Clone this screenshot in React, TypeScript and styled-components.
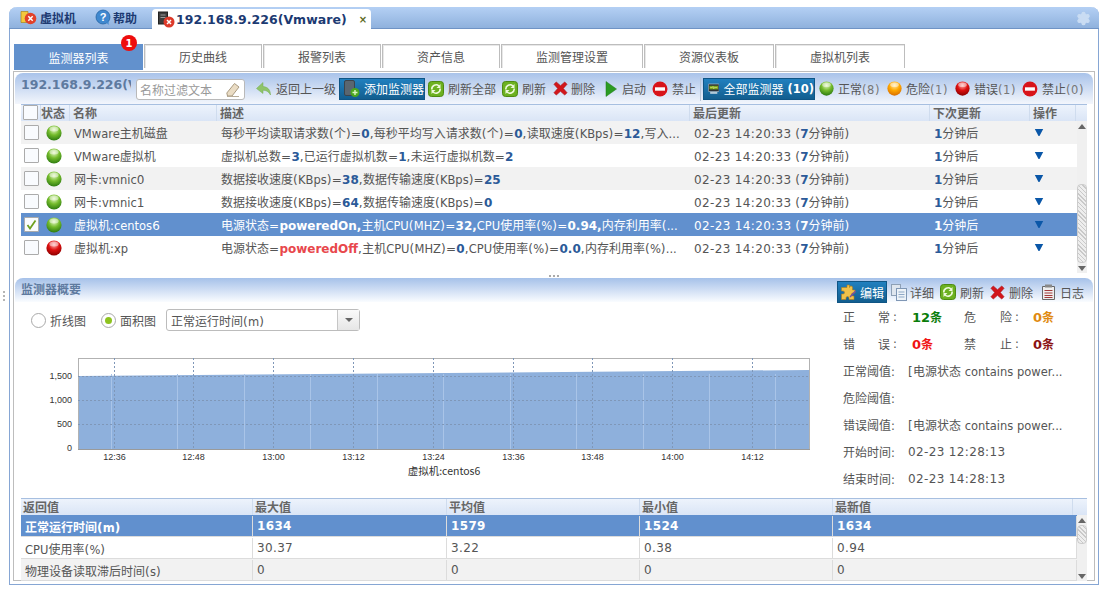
import React from "react";
import styled, { createGlobalStyle, css } from "styled-components";
import { Settings } from "lucide-react";

const Global = createGlobalStyle`
  html, body { margin: 0; padding: 0; background: #fff; }
  body { font-family: "DejaVu Sans", sans-serif; font-size: 11.5px; color: #555; width: 1105px; height: 592px; overflow: hidden; }
  * { box-sizing: border-box; }
`;

const Page = styled.div`display: flex; width: 1105px; height: 592px; padding-top: 7px;`;
const Handle = styled.div`
  width: 9px; flex: none; display: flex; flex-direction: column; align-items: center; justify-content: center;
  gap: 2px; padding-right: 2px; height: 577px;
`;
const HandleDot = styled.i`width: 2px; height: 2px; background: #b5b5b5; display: block;`;
const Win = styled.div`
  width: 1090px; height: 578px; border: 1px solid #86a6d4; border-top: 0; border-radius: 8px 8px 0 0;
  display: flex; flex-direction: column; background: #fff;
`;
const WinHead = styled.div`
  height: 22px; flex: none; display: flex; align-items: flex-end; padding-left: 11px; position: relative;
  margin: 0 -1px; border-radius: 8px 8px 0 0; background: linear-gradient(#b4d0f4, #8fb1dd); border-bottom: 1px solid #6f93c5;
`;
const Nav = styled.div<{ $ml?: number; $gap?: number }>`
  display: flex; align-items: center; gap: ${p => p.$gap ?? 3}px; height: 21px; margin-left: ${p => p.$ml ?? 0}px;
  font-weight: 700; color: #1c3a72;
`;
const ActiveTab = styled.div`
  width: 219px; height: 20px; margin-left: 15px; background: #fff; border-radius: 4px 4px 0 0; margin-bottom: -1px;
  display: flex; align-items: center; padding-left: 6px; gap: 1px; color: #1c3a72; font-weight: 700; font-size: 12.5px; letter-spacing: 0.03px;
`;
const CloseX = styled.span`margin-left: 11px; font-size: 10px; color: #5c6a22; font-weight: 700;`;
const Gear = styled(Settings)`position: absolute; right: 8px; top: 4px; color: #c9dcf3; fill: #c9dcf3;`;

const WinBody = styled.div`flex: 1; display: flex; flex-direction: column; padding: 15px 3px 3px 3px;`;
const Tabs = styled.div`display: flex; gap: 1px; height: 27px; padding-left: 1px; flex: none;`;
const Tab = styled.div<{ $w: number; $on?: boolean }>`
  width: ${p => p.$w}px; position: relative; display: flex; align-items: center; justify-content: center;
  height: ${p => (p.$on ? 26 : 24)}px;
  ${p => p.$on
    ? css`background: #6291cd; color: #fff;`
    : css`border: 1px solid #bdbdbd; border-bottom: 0; box-shadow: inset 1px 1px 0 #e8e8e8; color: #555;`}
`;
const Badge = styled.span`
  position: absolute; left: 107px; top: -9px; width: 16px; height: 16px; border-radius: 50%; background: #ee0d0d;
  color: #fff; font-weight: 700; font-size: 10px; display: flex; align-items: center; justify-content: center; z-index: 1;
`;

const Panel = styled.div`
  width: 1082px; height: 510px; border: 1px solid #bdbdbd; padding-top: 1px; display: flex; flex-direction: column; flex: none;
`;
const Toolbar = styled.div`
  height: 31px; flex: none; margin: 0 1px; display: flex; align-items: center; padding-left: 6px;
  background: linear-gradient(#a9c3ea, #f3f6fc); border-radius: 8px 8px 0 0;
`;
const BarTitle = styled.div`
  width: 110px; overflow: hidden; white-space: nowrap; font-weight: 700; font-size: 12.5px; color: #5e7a9f; margin-top: -8px; flex: none;
`;
const Filter = styled.div`
  width: 109px; height: 21px; margin: 2px 0 0 5px; flex: none; border: 1px solid #b9b9b9; border-radius: 3px; background: #fff;
  display: flex; align-items: center; justify-content: space-between; padding: 0 3px 0 3px; color: #999;
`;
const Tool = styled.div<{ $ml: number; $w: number; $gap?: number; $on?: boolean; $pl?: number }>`
  flex: none; height: 22px; width: ${p => p.$w}px; margin-left: ${p => p.$ml}px; display: flex; align-items: center;
  gap: ${p => p.$gap ?? 4}px; white-space: nowrap; color: #555;
  ${p => p.$on && css`
    background: linear-gradient(#2180bf, #125e8f); color: #fff; padding-left: ${p.$pl ?? 4}px;
    border: 1px solid #0f5585;
  `}
`;
const ToolSep = styled.i`flex: none; width: 1px; height: 24px; margin-left: 4px; background: #b9c6d8; display: block;`;
const Count = styled.span`letter-spacing: 0.6px; color: #777;`;
const CountStrong = styled.b`font-weight: 700;`;

const GridWrap = styled.div`margin: 0 7px; flex: none;`;
const HeadRow = styled.div<{ $h: number }>`
  display: flex; height: ${p => p.$h}px; border-top: 1px solid #a7bfe0; background: linear-gradient(#edf3fc, #dae5f6);
  font-weight: 700; color: #666;
`;
const HeadCell = styled.div<{ $w: number; $pl?: number }>`
  flex: none; width: ${p => p.$w}px; padding: 0 0 1px ${p => p.$pl ?? 3}px; border-right: 1px solid #cfdcee;
  display: flex; align-items: center; overflow: hidden; white-space: nowrap;
`;
const HeadFill = styled.div`flex: 1;`;
const GridBody = styled.div<{ $h: number }>`display: flex; height: ${p => p.$h}px; overflow: hidden;`;
const Rows = styled.div`flex: 1; min-width: 0;`;
const Row = styled.div<{ $odd?: boolean; $sel?: boolean }>`
  display: flex; height: 23px; align-items: center; white-space: nowrap;
  background: ${p => (p.$sel ? "#6190ce" : p.$odd ? "#f2f2f2" : "#fff")};
  color: ${p => (p.$sel ? "#fff" : "#555")};
`;
const Cell = styled.div<{ $w: number; $pl?: number }>`
  flex: none; width: ${p => p.$w}px; padding-left: ${p => p.$pl ?? 4}px; overflow: hidden; display: flex; align-items: center; white-space: pre;
`;
const Check = styled.span`
  width: 15px; height: 15px; border: 1px solid #ababab; border-radius: 1px; background: #f9fbfe; display: flex; align-items: center; justify-content: center;
`;
const Val = styled.b<{ $sel?: boolean; $red?: boolean }>`
  font-weight: 700; font-size: 12px; color: ${p => (p.$sel ? "#fff" : p.$red ? "#e8474c" : "#2b5a98")};
`;
const Tri = styled.span`
  width: 10px; height: 10px; background: #0a57a8; margin-top: -3px; display: block; flex: none;
  clip-path: polygon(0 0, 100% 0, 100% 15%, 55% 100%, 45% 100%, 0 15%);
`;
const Scroll = styled.div`
  width: 10px; flex: none; background: #f0f0f0; display: flex; flex-direction: column; align-items: center;
`;
const ArrowUp = styled.span`
  width: 0; height: 0; border-left: 4px solid transparent; border-right: 4px solid transparent; border-bottom: 5px solid #666; margin-top: 3px; flex: none;
`;
const ArrowDown = styled.span`
  width: 0; height: 0; border-left: 4px solid transparent; border-right: 4px solid transparent; border-top: 5px solid #666; margin: 3px 0 2px; flex: none;
`;
const Thumb = styled.span<{ $top: number; $h: number }>`
  width: 10px; height: ${p => p.$h}px; margin-top: ${p => p.$top}px; flex: none; border-radius: 4px; border: 1px solid #ccc;
  background: repeating-linear-gradient(45deg, #c9c9c9, #c9c9c9 1px, #eee 1px, #eee 3px);
`;
const Split = styled.div`
  height: 5px; flex: none; display: flex; justify-content: center; gap: 2px; padding-top: 2px;
`;
const SplitDot = styled.i`width: 2px; height: 2px; background: #aaa; display: block;`;

const SumHead = styled.div`
  height: 24px; flex: none; margin: 0 1px; display: flex; padding-left: 6px; border-radius: 8px 8px 0 0;
  background: linear-gradient(#a6c1e9, #fafcff);
`;
const SumTitle = styled.div`font-weight: 700; color: #5e7a9f; padding-top: 2px;`;
const SumTools = styled.div`margin-left: auto; padding: 3px 9px 0 0; display: flex; align-items: flex-start; position: relative; z-index: 1;`;
const Overview = styled.div`height: 196px; flex: none; display: flex;`;
const LeftCol = styled.div`width: 823px; flex: none; padding: 7px 0 0 7px;`;
const Controls = styled.div`height: 22px; display: flex; align-items: center; padding-left: 10px;`;
const Radio = styled.span<{ $ml?: number }>`
  width: 15px; height: 15px; border: 1px solid #a9a9a9; border-radius: 50%; background: #fff; flex: none; margin-left: ${p => p.$ml ?? 0}px;
  display: flex; align-items: center; justify-content: center; margin-right: 4px;
`;
const RadioDot = styled.i`width: 7px; height: 7px; border-radius: 50%; background: #8ec31f; display: block;`;
const Select = styled.div`
  width: 194px; height: 22px; margin-left: 10px; border: 1px solid #bcbcbc; border-radius: 3px; display: flex; align-items: center; padding-left: 4px; position: relative; background: #fff;
`;
const SelectBtn = styled.span`
  margin-left: auto; width: 22px; height: 100%; border-left: 1px solid #c6c6c6; background: linear-gradient(#fafafa, #e6e6e6); display: flex; align-items: center; justify-content: center;
`;
const SelectArrow = styled.i`width: 0; height: 0; border-left: 4px solid transparent; border-right: 4px solid transparent; border-top: 4px solid #666; display: block;`;
const ChartSvg = styled.svg`display: block; margin-top: 14px;`;
const RightCol = styled.div`flex: 1; padding: 1px 0 0 6px;`;
const InfoRow = styled.div`height: 27px; display: flex; align-items: center; white-space: nowrap;`;
const Spread = styled.span<{ $w: number }>`width: ${p => p.$w}px; display: flex; justify-content: space-between; flex: none;`;
const Colon = styled.span<{ $w: number }>`width: ${p => p.$w}px; flex: none; padding-left: 3px;`;
const Stat = styled.b<{ $c: string; $w?: number }>`font-weight: 700; font-size: 13px; color: ${p => p.$c}; width: ${p => p.$w ?? 52}px; flex: none;`;
const InfoLabel = styled.span`width: 65px; flex: none;`;

const Zh = styled.span`font-family: "Noto Sans CJK SC", "DejaVu Sans", sans-serif; font-size: 12px;`;
const Num = styled.span`font-size: 12px; letter-spacing: 0.35px;`;
const Sym = styled.span`font-size: 12px; letter-spacing: 0.3px;`;

const T = ({ t }: { t: string }) => (
  <>
    {t.split(/([\u3400-\u9fff]+|\d[\d:\- .]*\d|\d|[()=,\[]+)/).map((s, i) => {
      if (i % 2 === 0) return s;
      if (/[\u3400-\u9fff]/.test(s)) return <Zh key={i}>{s}</Zh>;
      if (/\d/.test(s)) return <Num key={i}>{s}</Num>;
      return <Sym key={i}>{s}</Sym>;
    })}
  </>
);

const Rich = ({ t, sel }: { t: string; sel?: boolean }) => (
  <>
    {t.split("*").map((s, i) =>
      i % 2 ? <Val key={i} $sel={sel} $red={s === "poweredOff"}>{s}</Val> : <T key={i} t={s} />
    )}
  </>
);

/* icons */
const Ball = ({ c, s = 15 }: { c: "g" | "o" | "r" | "b"; s?: number }) => {
  const m = { g: ["#e4f7c4", "#74bb2c", "#2c7a10"], o: ["#ffe9a8", "#ffa800", "#d96f00"], r: ["#ffb0b0", "#dd1010", "#8c0000"], b: ["#cfe6ff", "#4a8fd8", "#14509c"] }[c];
  return (
    <svg width={s} height={s} viewBox="0 0 16 16">
      <defs>
        <radialGradient id={`ball-${c}`} cx="50%" cy="28%" r="72%">
          <stop offset="0" stopColor={m[0]} />
          <stop offset="0.5" stopColor={m[1]} />
          <stop offset="1" stopColor={m[2]} />
        </radialGradient>
      </defs>
      <circle cx="8" cy="8" r="7.6" fill={`url(#ball-${c})`} />
      <ellipse cx="8" cy="4" rx="4.600" ry="2.500" fill="#fff" opacity="0.45" />
    </svg>
  );
};
const Refresh = () => (
  <svg width="16" height="16" viewBox="0 0 16 16">
    <rect x="0.500" y="0.500" width="15" height="15" rx="3" fill="#6cb120" stroke="#4d8a12" />
    <path d="M3.800 8.500A4.300 4.300 0 0 1 11 5" fill="none" stroke="#eef9dc" strokeWidth="1.600" />
    <path d="M12.200 7.500A4.300 4.300 0 0 1 5 11" fill="none" stroke="#eef9dc" strokeWidth="1.600" />
    <path d="M12.500 3v4h-4z" fill="#eef9dc" />
    <path d="M3.500 13V9h4z" fill="#eef9dc" />
  </svg>
);
const RedX = () => (
  <svg width="15" height="15" viewBox="0 0 16 16">
    <path d="M1 3.500 3.500 1 8 5l4.500-4L15 3.500 11 8l4 4.500L12.500 15 8 11l-4.500 4L1 12.500 5 8z" fill="#d2161b" stroke="#a80e12" strokeWidth="0.6" />
  </svg>
);
const Play = () => (
  <svg width="12" height="16" viewBox="0 0 12 16"><path d="M1 0.500 11.500 8 1 15.500z" fill="#2b9b22" stroke="#1e7a18" strokeWidth="0.5" /></svg>
);
const Forbid = () => (
  <svg width="16" height="16" viewBox="0 0 16 16">
    <circle cx="8" cy="8" r="7.500" fill="#d8141a" />
    <rect x="3" y="6.300" width="10" height="3.400" fill="#fff" />
  </svg>
);
const Back = () => (
  <svg width="16" height="16" viewBox="0 0 16 16"><path d="M7 1.500 0.500 7.500 7 12.500V9.300c3 0 5.500 1 7.500 4.700 0-5-2.500-8-7.500-8.500z" fill="#8fc46a" stroke="#74ad4e" strokeWidth="0.5" /></svg>
);
const ServerAdd = () => (
  <svg width="16" height="18" viewBox="0 0 16 18">
    <rect x="0.500" y="0.500" width="10" height="15" rx="1.500" fill="#5a6670" stroke="#3b444c" />
    <circle cx="11" cy="12.500" r="4.500" fill="#4aa51f" />
    <path d="M11 10v5M8.500 12.500h5" stroke="#d9f5c0" strokeWidth="1.400" />
  </svg>
);
const Monitor = () => (
  <svg width="16" height="16" viewBox="0 0 16 16">
    <rect x="0.500" y="1" width="15" height="10.500" rx="1" fill="#2b3136" stroke="#c9d2da" strokeWidth="0.8" />
    <rect x="2" y="3.500" width="12" height="5" fill="#7ea51c" />
    <path d="M3 6h3l1-1.500 1 3 1-1.500h4" stroke="#e7f4a0" strokeWidth="0.8" fill="none" />
    <rect x="3" y="12.500" width="10" height="2" fill="#dfe5ea" />
  </svg>
);
const Puzzle = () => (
  <svg width="17" height="17" viewBox="0 0 17 17">
    <path d="M7 1h2.500v2.500a1.500 1.500 0 0 1 3 0V6H15v3h-2a1.500 1.500 0 0 0 0 3h1v3.500H9V14a1.500 1.500 0 0 0-3 0v1.500H1.500V10H3a1.500 1.500 0 0 0 0-3H1.500V3.500H7z" fill="#f1c14a" stroke="#b57d16" strokeWidth="0.6" />
    <path d="M10 13 15.500 7" stroke="#7a4f9e" strokeWidth="1.400" />
  </svg>
);
const Docs = () => (
  <svg width="16" height="17" viewBox="0 0 16 17">
    <rect x="0.500" y="0.500" width="9" height="11" fill="#dfe6ee" stroke="#8ea0b5" />
    <rect x="5.500" y="4.500" width="10" height="12" fill="#eef3f8" stroke="#7f97b5" />
    <path d="M7.500 8h6M7.500 10.500h6M7.500 13h6" stroke="#8ea8c6" />
  </svg>
);
const Log = () => (
  <svg width="13" height="16" viewBox="0 0 13 16">
    <path d="M0.500 2.500h8l4 0v13h-12z" fill="#eee" stroke="#666" />
    <rect x="3" y="0.500" width="7" height="3" fill="#888" />
    <path d="M2.500 6.500h8M2.500 9h8M2.500 11.500h8M2.500 13.500h8" stroke="#a23a3a" strokeWidth="1.200" />
  </svg>
);
const Eraser = () => (
  <svg width="16" height="16" viewBox="0 0 16 16">
    <path d="M9.500 1.500 14 5 7 14H2.500L1.800 11z" fill="#eadcc4" stroke="#a99a80" />
    <path d="M2 14.500h12" stroke="#b7ac98" />
  </svg>
);
const Folder = () => (
  <svg width="17" height="17" viewBox="0 0 17 17">
    <path d="M1 2.500h7l-.500 11H1z" fill="#f4c83c" stroke="#a8861c" strokeWidth="0.7" />
    <circle cx="10.500" cy="9.500" r="5.800" fill="#e1412a" />
    <path d="M8.300 7.300l4.400 4.400M12.700 7.300l-4.400 4.400" stroke="#fff" strokeWidth="1.500" />
  </svg>
);
const Help = () => (
  <svg width="17" height="17" viewBox="0 0 17 17">
    <circle cx="8" cy="8" r="7" fill="#3f88cf" stroke="#1f5f9e" strokeWidth="0.7" />
    <text x="8" y="12" textAnchor="middle" fontSize="11" fontWeight="700" fill="#fff" fontFamily="Liberation Sans, sans-serif">?</text>
    <path d="M11 13l2.500 3 .2-4z" fill="#3f88cf" />
  </svg>
);
const ServerX = () => (
  <svg width="17" height="17" viewBox="0 0 17 17">
    <rect x="0.500" y="1" width="9" height="12" fill="#3d3d3d" stroke="#222" />
    <path d="M2.500 4h5M2.500 6.500h5" stroke="#9a9a9a" />
    <circle cx="11" cy="11" r="5.500" fill="#dd3a2a" />
    <path d="M9 9l4 4M13 9l-4 4" stroke="#fff" strokeWidth="1.500" />
  </svg>
);
const Tick = () => (
  <svg width="11" height="11" viewBox="0 0 11 11"><path d="M1.500 6 4 9.500 9.500 1.500" fill="none" stroke="#6ea020" strokeWidth="1.800" /></svg>
);

const tabs: [string, number][] = [["监测器列表", 129], ["历史曲线", 118], ["报警列表", 118], ["资产信息", 118], ["监测管理设置", 142], ["资源仪表板", 130], ["虚拟机列表", 130]];
const cols = [20, 29, 147, 473, 240, 100, 46];
const time = "02-23 14:20:33 (*7*分钟前)";
const rows = [
  { c: "g", n: "VMware主机磁盘", d: "每秒平均读取请求数(个)=*0*,每秒平均写入请求数(个)=*0*,读取速度(KBps)=*12*,写入..." },
  { c: "g", n: "VMware虚拟机", d: "虚拟机总数=*3*,已运行虚拟机数=*1*,未运行虚拟机数=*2*" },
  { c: "g", n: "网卡:vmnic0", d: "数据接收速度(KBps)=*38*,数据传输速度(KBps)=*25*" },
  { c: "g", n: "网卡:vmnic1", d: "数据接收速度(KBps)=*64*,数据传输速度(KBps)=*0*" },
  { c: "g", n: "虚拟机:centos6", sel: true, d: "电源状态=*poweredOn,*主机CPU(MHZ)=*32,*CPU使用率(%)=*0.94,*内存利用率(..." },
  { c: "r", n: "虚拟机:xp", d: "电源状态=*poweredOff*,主机CPU(MHZ)=*0*,CPU使用率(%)=*0.0*,内存利用率(%)..." },
] as const;
const tools = [
  { ml: 11, w: 80, icon: <Back />, t: "返回上一级" },
  { ml: 3, w: 86, icon: <ServerAdd />, t: "添加监测器", on: true },
  { ml: 3, w: 68, icon: <Refresh />, t: "刷新全部" },
  { ml: 6, w: 44, icon: <Refresh />, t: "刷新" },
  { ml: 7, w: 43, gap: 3, icon: <RedX />, t: "删除" },
  { ml: 9, w: 41, gap: 5, icon: <Play />, t: "启动" },
  { ml: 6, w: 44, icon: <Forbid />, t: "禁止" },
];
const counts = [
  { ml: 4, c: "g", t: "正常", n: 8 },
  { ml: 6, c: "o", t: "危险", n: 1 },
  { ml: 6, c: "r", t: "错误", n: 1 },
] as const;
const sumTools = [
  { ml: 0, w: 50, gap: 3, pl: 2, icon: <Puzzle />, t: "编辑", on: true },
  { ml: 4, w: 43, gap: 3, icon: <Docs />, t: "详细" },
  { ml: 6, w: 44, icon: <Refresh />, t: "刷新" },
  { ml: 6, w: 44, icon: <RedX />, t: "删除" },
  { ml: 8, w: 42, gap: 5, icon: <Log />, t: "日志" },
];
const valCols = [232, 194, 193, 193, 244];
const valRows = [
  { v: ["正常运行时间(m)", "1634", "1579", "1524", "1634"], sel: true },
  { v: ["CPU使用率(%)", "30.37", "3.22", "0.38", "0.94"] },
  { v: ["物理设备读取滞后时间(s)", "0", "0", "0", "0"], odd: true },
];

const ValRow = styled(Row)`height: 22px; border-bottom: 1px solid #dcdcdc; padding-top: 1px;`;
const ValCell = styled(Cell)`height: 100%; border-right: 1px solid #dcdcdc;`;
const ValBold = styled.b`font-weight: 700;`;

const Chart = () => {
  const ys: [string, number, number][] = [["1,500", 376, 3], ["1,000", 400, 3], ["500", 424, 3], ["0", 449, 2]];
  const xs: [string, number][] = [["12:36", 114.5], ["12:48", 193.5], ["13:00", 273.5], ["13:12", 353.5], ["13:24", 433.5], ["13:36", 513.5], ["13:48", 592.5], ["14:00", 672.5], ["14:12", 752.5]];
  const light = [111, 177, 244, 310, 377, 443, 510, 576, 643, 709, 775];
  return (
    <ChartSvg width="810" height="135" viewBox="21 345 810 135">
      <rect x="78.500" y="358.500" width="731" height="91" fill="#fff" stroke="#b2b2b2" />
      <path d="M79 376 L809 370 V449 H79z" fill="#8eb0dc" />
      {light.map(x => <line key={x} x1={x + 0.5} x2={x + 0.5} y1="374" y2="449" stroke="#a9c4e8" />)}
      {ys.slice(0, 3).map(([, y]) => <line key={y} x1="78" x2="809" y1={y + 0.5} y2={y + 0.5} stroke="#7f97b8" strokeDasharray="2 2" />)}
      {xs.map(([, x]) => <line key={x} x1={x} x2={x} y1="358" y2="449" stroke="#7f97b8" strokeDasharray="2 2" />)}
      <line x1="78" x2="810" y1="449.500" y2="449.500" stroke="#9a9a9a" />
      {ys.map(([l, y, d]) => (
        <text key={l} x="72" y={y + d} textAnchor="end" fontSize="9" fill="#333" fontFamily="Liberation Sans, sans-serif">{l}</text>
      ))}
      {xs.map(([l, x]) => (
        <text key={l} x={x} y="460" textAnchor="middle" fontSize="9" fill="#333" fontFamily="Liberation Sans, sans-serif">{l}</text>
      ))}
      <text x="444" y="475" textAnchor="middle" fontSize="10.500" fill="#333" fontFamily="Noto Sans CJK SC, sans-serif">虚拟机:centos6</text>
    </ChartSvg>
  );
};

export default function App() {
  return (
    <Page>
      <Global />
      <Handle>
        <HandleDot /><HandleDot /><HandleDot />
      </Handle>
      <Win>
        <WinHead>
          <Nav $gap={3}><Folder /><Zh>虚拟机</Zh></Nav>
          <Nav $ml={19} $gap={1}><Help /><Zh>帮助</Zh></Nav>
          <ActiveTab>
            <ServerX />
            192.168.9.226(Vmware)
            <CloseX>×</CloseX>
          </ActiveTab>
          <Gear size={15} />
        </WinHead>
        <WinBody>
          <Tabs>
            {tabs.map(([t, w], i) => (
              <Tab key={t} $w={w} $on={i === 0}>
                <Zh>{t}</Zh>
                {i === 0 && <Badge>1</Badge>}
              </Tab>
            ))}
          </Tabs>
          <Panel>
            <Toolbar>
              <BarTitle>192.168.9.226(Vmware)</BarTitle>
              <Filter><Zh>名称过滤文本</Zh><Eraser /></Filter>
              {tools.map(b => (
                <Tool key={b.t} $ml={b.ml} $w={b.w} $gap={b.gap} $on={b.on}>
                  {b.icon}<Zh>{b.t}</Zh>
                </Tool>
              ))}
              <ToolSep />
              <Tool $ml={2} $w={112} $on>
                <Monitor /><Zh>全部监测器</Zh><CountStrong>(10)</CountStrong>
              </Tool>
              {counts.map(b => (
                <Tool key={b.t} $ml={b.ml} $w={62}>
                  <Ball c={b.c} /><span><Zh>{b.t}</Zh><Count>({b.n})</Count></span>
                </Tool>
              ))}
              <Tool $ml={5} $w={62}>
                <Forbid /><span><Zh>禁止</Zh><Count>(0)</Count></span>
              </Tool>
            </Toolbar>
            <GridWrap>
              <HeadRow $h={17}>
                <HeadCell $w={20} $pl={2}><Check /></HeadCell>
                {["状态", "名称", "描述", "最后更新", "下次更新", "操作"].map((h, i) => (
                  <HeadCell key={h} $w={cols[i + 1]} $pl={i === 0 ? 0 : 3}><Zh>{h}</Zh></HeadCell>
                ))}
                <HeadFill />
              </HeadRow>
              <GridBody $h={152}>
                <Rows>
                  {rows.map((r, i) => {
                    const sel = "sel" in r;
                    return (
                      <Row key={r.n} $odd={i % 2 === 0} $sel={sel}>
                        <Cell $w={cols[0]} $pl={3}><Check>{sel && <Tick />}</Check></Cell>
                        <Cell $w={cols[1]} $pl={5}><Ball c={r.c} s={16} /></Cell>
                        <Cell $w={cols[2]}><span><T t={r.n} /></span></Cell>
                        <Cell $w={cols[3]}><span><Rich t={r.d} sel={sel} /></span></Cell>
                        <Cell $w={cols[4]}><span><Rich t={time} sel={sel} /></span></Cell>
                        <Cell $w={cols[5]}><span><Rich t="*1*分钟后" sel={sel} /></span></Cell>
                        <Cell $w={cols[6]}><Tri /></Cell>
                      </Row>
                    );
                  })}
                </Rows>
                <Scroll>
                  <ArrowUp />
                  <Thumb $top={55} $h={79} />
                  <ArrowDown />
                </Scroll>
              </GridBody>
            </GridWrap>
            <Split><SplitDot /><SplitDot /><SplitDot /></Split>
            <SumHead>
              <SumTitle><Zh>监测器概要</Zh></SumTitle>
              <SumTools>
                {sumTools.map(b => (
                  <Tool key={b.t} $ml={b.ml} $w={b.w} $gap={b.gap ?? 4} $on={b.on} $pl={b.pl}>
                    {b.icon}<Zh>{b.t}</Zh>
                  </Tool>
                ))}
              </SumTools>
            </SumHead>
            <Overview>
              <LeftCol>
                <Controls>
                  <Radio /><Zh>折线图</Zh>
                  <Radio $ml={15}><RadioDot /></Radio><Zh>面积图</Zh>
                  <Select>
                    <span><T t="正常运行时间(m)" /></span>
                    <SelectBtn><SelectArrow /></SelectBtn>
                  </Select>
                </Controls>
                <Chart />
              </LeftCol>
              <RightCol>
                <InfoRow>
                  <Spread $w={47}><Zh>正</Zh><Zh>常</Zh></Spread><Colon $w={22}>:</Colon>
                  <Stat $c="#0a7d0a">12<Zh>条</Zh></Stat>
                  <Spread $w={48}><Zh>危</Zh><Zh>险</Zh></Spread><Colon $w={21}>:</Colon>
                  <Stat $c="#e08a10">0<Zh>条</Zh></Stat>
                </InfoRow>
                <InfoRow>
                  <Spread $w={47}><Zh>错</Zh><Zh>误</Zh></Spread><Colon $w={22}>:</Colon>
                  <Stat $c="#f01414">0<Zh>条</Zh></Stat>
                  <Spread $w={48}><Zh>禁</Zh><Zh>止</Zh></Spread><Colon $w={21}>:</Colon>
                  <Stat $c="#8b1212">0<Zh>条</Zh></Stat>
                </InfoRow>
                <InfoRow><InfoLabel><T t="正常阈值:" /></InfoLabel><span><T t="[电源状态 contains power..." /></span></InfoRow>
                <InfoRow><InfoLabel><T t="危险阈值:" /></InfoLabel></InfoRow>
                <InfoRow><InfoLabel><T t="错误阈值:" /></InfoLabel><span><T t="[电源状态 contains power..." /></span></InfoRow>
                <InfoRow><InfoLabel><T t="开始时间:" /></InfoLabel><span><T t="02-23 12:28:13" /></span></InfoRow>
                <InfoRow><InfoLabel><T t="结束时间:" /></InfoLabel><span><T t="02-23 14:28:13" /></span></InfoRow>
              </RightCol>
            </Overview>
            <GridWrap>
              <HeadRow $h={17}>
                {["返回值", "最大值", "平均值", "最小值", "最新值"].map((h, i) => (
                  <HeadCell key={h} $w={i === 4 ? 240 : valCols[i]} $pl={2}><Zh>{h}</Zh></HeadCell>
                ))}
                <HeadFill />
              </HeadRow>
              <GridBody $h={66}>
                <Rows>
                  {valRows.map(r => (
                    <ValRow key={r.v[0]} $sel={r.sel} $odd={r.odd}>
                      {r.v.map((v, i) => (
                        <ValCell key={i} $w={valCols[i]}>
                          {r.sel ? <ValBold><T t={v} /></ValBold> : <span><T t={v} /></span>}
                        </ValCell>
                      ))}
                    </ValRow>
                  ))}
                </Rows>
                <Scroll>
                  <ArrowUp />
                  <Thumb $top={2} $h={19} />
                  <HeadFill />
                  <ArrowDown />
                </Scroll>
              </GridBody>
            </GridWrap>
          </Panel>
        </WinBody>
      </Win>
    </Page>
  );
}
